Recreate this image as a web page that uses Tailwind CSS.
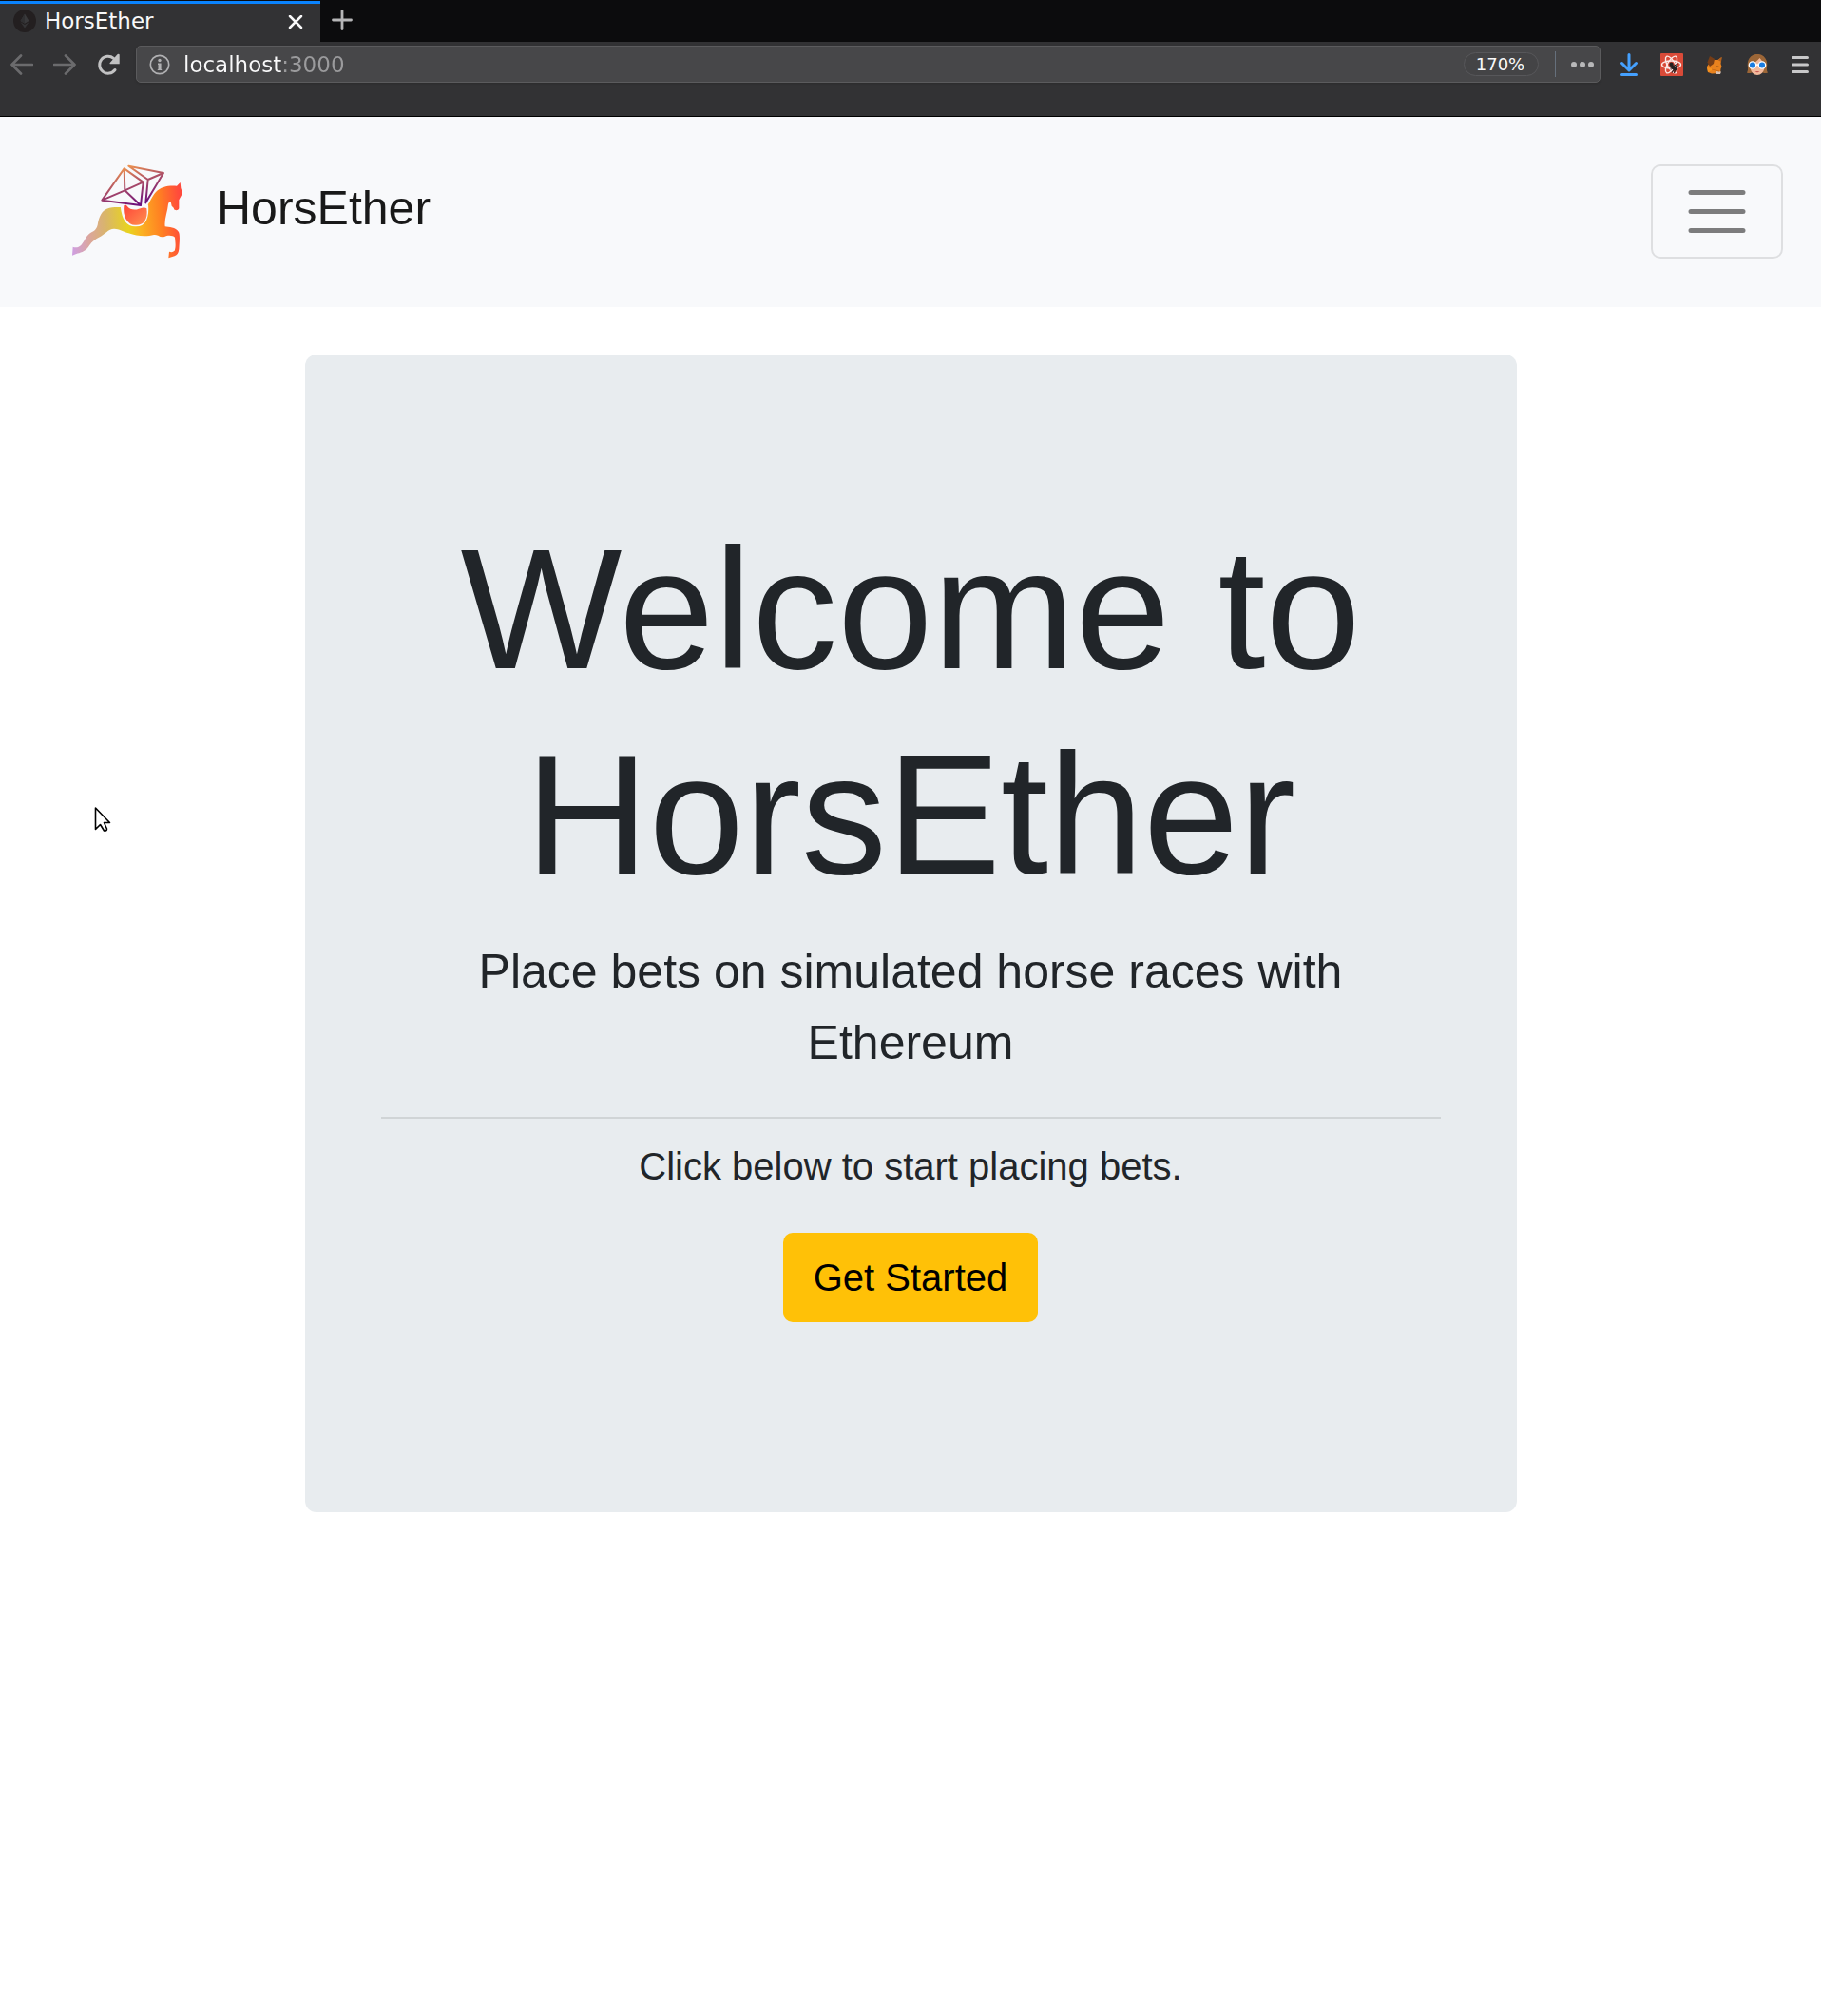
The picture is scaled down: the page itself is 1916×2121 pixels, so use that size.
<!DOCTYPE html>
<html lang="en">
<head>
<meta charset="utf-8">
<meta name="viewport" content="width=device-width, initial-scale=1">
<title>HorsEther</title>
<script src="https://cdn.jsdelivr.net/npm/@tailwindcss/browser@4"></script>
</head>
<body class="relative min-h-screen bg-white font-['Liberation_Sans',Arial,sans-serif] text-[#212529]">

<!-- Browser window chrome -->
<div class="border-b border-black bg-[#323234] font-['DejaVu_Sans',sans-serif] text-[#f9f9fa]">
  <div class="flex h-11 bg-[#0c0c0d] pt-px">
    <div class="flex w-[337px] items-center border-t-3 border-[#0a84ff] bg-[#323234] pr-[18px] pb-1 pl-[14px]">
      <svg class="size-6 shrink-0" viewBox="0 0 24 24" aria-hidden="true">
        <circle cx="12" cy="12" r="12" fill="#231f20"/>
        <path d="M12 4.500l4.500 7.500-4.500 2.700-4.500-2.700z" fill="#39393b"/>
        <path d="M7.500 13.200l4.500 2.700 4.500-2.700-4.500 6.300z" fill="#343436"/>
        <path d="M12 4.500v10.200l-4.500-2.700z" fill="#303032"/>
      </svg>
      <span class="ml-[9px] flex-1 text-[23px] leading-8">HorsEther</span>
      <button type="button" aria-label="Close tab" class="mt-1">
        <svg class="size-4" viewBox="0 0 16 16" fill="none" stroke="#f9f9fa" stroke-width="2.500" stroke-linecap="round" aria-hidden="true"><path d="M2 1l12 12M14 1L2 13"/></svg>
      </button>
    </div>
    <button type="button" aria-label="New tab" class="ml-3 pb-1">
      <svg class="size-[22px]" viewBox="0 0 22 22" fill="none" stroke="#b6b6b7" stroke-width="2.800" stroke-linecap="round" aria-hidden="true"><path d="M11 1.500v19M1.500 11h19"/></svg>
    </button>
  </div>
  <div class="flex items-center pt-1 pr-[10px] pb-[35px] pl-[11px]">
    <div class="mr-[18px] flex gap-[21px]">
      <button type="button" aria-label="Back"><svg class="size-6" viewBox="0 0 24 24" fill="none" stroke="#6b6b6d" stroke-width="2.700" stroke-linecap="round" stroke-linejoin="round" aria-hidden="true"><path d="M23 12H1.500M11 2.500L1.500 12l9.500 9.500"/></svg></button>
      <button type="button" aria-label="Forward"><svg class="size-6" viewBox="0 0 24 24" fill="none" stroke="#6b6b6d" stroke-width="2.700" stroke-linecap="round" stroke-linejoin="round" aria-hidden="true"><path d="M1 12h21.500M13 2.500l9.500 9.500-9.500 9.500"/></svg></button>
      <button type="button" aria-label="Reload"><svg class="size-6 overflow-visible" viewBox="-1 0 24 24" aria-hidden="true"><path d="M19 17.500A9 9 0 1 1 17.500 5.300" fill="none" stroke="#c2c2c3" stroke-width="3" stroke-linecap="round"/><path d="M23.700 1.400v9.800h-9.800q-.9-.5-.2-1.200l8-8.900q1.400-.9 2 .3z" fill="#c2c2c3"/></svg></button>
    </div>
    <div class="mr-[18px] flex h-[39px] min-w-0 flex-1 items-center rounded-[5px] border border-[#5b5b5d] bg-[#474749] pl-[13px] shadow-sm">
      <svg class="size-[22px] shrink-0" viewBox="0 0 22 22" aria-hidden="true"><circle cx="11" cy="11" r="9.700" fill="none" stroke="#b1b1b3" stroke-width="1.700"/><circle cx="11" cy="6.500" r="1.700" fill="#b1b1b3"/><path d="M9 9.500h3.600v6.500H13.200v1H8.800V16h.7v-5H9z" fill="#b1b1b3"/></svg>
      <input type="text" aria-label="Address" value="localhost:3000" class="ml-[14px] h-9 min-w-0 flex-1 bg-[linear-gradient(90deg,#f9f9fa_104px,#9b9b9d_104px)] bg-clip-text text-[23px] text-transparent outline-none">
      <button type="button" class="h-[25px] w-[79px] rounded-full border border-[#57575a] bg-[#444446] pr-0.5 text-lg leading-[23px]">170%</button>
      <span class="mr-4 ml-[17px] h-[27px] w-px bg-[#66707c]"></span>
      <button type="button" aria-label="Page actions" class="mr-[6px]"><svg class="h-2 w-6" viewBox="0 0 24 8" fill="#b8b8b9" aria-hidden="true"><circle cx="3" cy="4" r="3"/><circle cx="12" cy="4" r="3"/><circle cx="21" cy="4" r="3"/></svg></button>
    </div>
    <div class="flex gap-[21px]">
      <button type="button" aria-label="Downloads"><svg class="size-6" viewBox="0 0 24 24" fill="none" stroke="#45a1ff" stroke-width="3" stroke-linecap="round" stroke-linejoin="round" aria-hidden="true"><path d="M12 1.500v16M4.500 10.500l7.500 7.500 7.500-7.500M4.500 22.500h15"/></svg></button>
      <button type="button" aria-label="React Developer Tools"><svg class="size-6" viewBox="0 0 24 24" fill="none" aria-hidden="true">
        <rect width="24" height="24" rx="1" fill="#d94a38"/>
        <g stroke="#fbe9e7" stroke-width="1.400"><ellipse cx="11.500" cy="12" rx="10" ry="4"/><ellipse cx="11.500" cy="12" rx="10" ry="4" transform="rotate(60 11.500 12)"/><ellipse cx="11.500" cy="12" rx="10" ry="4" transform="rotate(120 11.500 12)"/></g>
        <g stroke="#231f20" stroke-width="1.200"><path d="M10.500 17l9-3M12 20.500l4-6M14.500 21l2-8M10 14.500l6 3M14.500 13l4-2"/></g>
        <circle cx="11.500" cy="11.700" r="2.200" fill="#231f20"/><ellipse cx="14.500" cy="15.500" rx="2" ry="3.500" transform="rotate(-42 14.500 15.500)" fill="#231f20"/>
      </svg></button>
      <button type="button" aria-label="MetaMask"><svg class="size-6" viewBox="0 0 24 24" aria-hidden="true">
        <path d="M19.500 4l-4 3H9L4 14l1 6 4 1.500 9-.5.500-4.500 1-2.500-1-3z" fill="#e8821e"/>
        <path d="M7 3l5 3-1 5-4 3-2.500-4.500z" fill="#763d16"/><path d="M19.500 4l-4 3 3.500 2z" fill="#b45f1c"/><path d="M4 15l7.500 2-6.500 3z" fill="#f6931f"/><path d="M14 13.500l3 .5-1.500 1z" fill="#4a2b18"/><path d="M13 19l6 .5-1 2.500h-5z" fill="#d7c1b3"/><path d="M9 17l8 2" stroke="#c86a18"/>
      </svg></button>
      <button type="button" aria-label="Privacy extension"><svg class="size-6" viewBox="0 0 24 24" aria-hidden="true">
        <path d="M1 20.500C3.500 17 .5 12 2.500 7.500 4.500 2.500 8 1 12 1s7.500 1.500 9.500 6.500c2 4.500-1 9.500 1.500 13q-3 1-5 0H6q-3 1-5 0z" fill="#9c6637"/>
        <path d="M4.500 12q6-2 10-7 2.500 3.500 5 5.500v5.500q-2 7-7.500 7t-7.500-7z" fill="#f2b99b"/>
        <g fill="#1a7ce0" stroke="#fff" stroke-width="1.300"><circle cx="7" cy="12.500" r="3.700"/><circle cx="17" cy="12.500" r="3.700"/></g><path d="M10.500 12.500q1.500-1.200 3 0" fill="none" stroke="#fff" stroke-width="1.500"/>
        <path d="M9.500 19.500q2.500-1.200 5 0-2.500 1.500-5 0z" fill="#c5504c"/>
      </svg></button>
      <button type="button" aria-label="Open menu"><svg class="size-6" viewBox="0 0 24 24" fill="none" stroke="#c8c8c9" stroke-width="3" stroke-linecap="round" aria-hidden="true"><path d="M4.500 4.500h15M4.500 12h15M4.500 19.500h15"/></svg></button>
    </div>
  </div>
</div>

<!-- Site navigation -->
<nav class="flex h-[200px] items-center justify-between bg-[#f8f9fb] pr-10 pb-0.5 pl-[76px]">
  <a href="#" class="flex items-center gap-9 text-[50px] leading-[75px] text-black/90">
    <svg class="h-[99px] w-[116px]" viewBox="48 39 348 297" fill="none" aria-hidden="true">
      <defs>
        <linearGradient id="coat" gradientUnits="userSpaceOnUse" x1="48" y1="290" x2="395" y2="260">
          <stop offset="0" stop-color="#cf9fe0"/><stop offset=".16" stop-color="#dba69c"/><stop offset=".32" stop-color="#d9b56a"/><stop offset=".52" stop-color="#e8d31f"/><stop offset=".64" stop-color="#fbb022"/><stop offset=".82" stop-color="#ff8022"/><stop offset="1" stop-color="#ff4a3c"/>
        </linearGradient>
        <linearGradient id="saddle" x1="0" y1="0" x2="1" y2="1"><stop stop-color="#ff4338"/><stop offset="1" stop-color="#ff9250"/></linearGradient>
        <linearGradient id="gem" gradientUnits="userSpaceOnUse" x1="210" y1="45" x2="250" y2="170"><stop stop-color="#f0964f"/><stop offset=".5" stop-color="#a84a68"/><stop offset="1" stop-color="#6b0f7d"/></linearGradient>
      </defs>
      <path fill="url(#coat)" d="M48 326L50 299Q59 303 68 299C82 294 87 271 99 260C111 249 123 250 128 230C133 201 142 186 157 179C172 173 187 174 204 174L280 174C294 160 299 139 312 126C329 109 351 105 378 107L389 96L391 114Q396 125 393 136L385 151L385 178Q383 184 376 184Q368 183 368 176L362 170L359 157Q354 154 351 164C349 188 338 212 341 235C353 237 374 237 384 252C389 263 386 287 385 306Q383 324 371 328L352 334L354 314Q364 318 371 311C376 299 373 281 372 269C366 262 349 261 339 267Q328 270 319 263Q311 260 306 261C283 267 253 266 226 256C209 251 193 241 180 242C161 243 152 259 132 269C119 276 111 281 99 299C88 315 72 317 61 321z"/>
      <path fill="#f8f9fb" d="M200 170L288 166Q291 197 282 215Q272 235 249 235Q227 236 215 219Q204 204 200 170z"/>
      <path fill="url(#saddle)" d="M211 169Q216 164 221 170C230 182 245 184 258 179C272 175 278 174 283 178Q287 203 276 219Q265 232 246 230Q229 230 218 212Q208 195 211 169z"/>
      <g stroke="url(#gem)" stroke-width="6" stroke-linejoin="round"><path d="M212 52L142 152L264 168L272 95zL214 121L142 152M272 95L214 121L264 168"/><path d="M226 44L336 66L280 160L287 87zM336 66L287 87"/></g>
    </svg>
    <span class="pb-1.5">HorsEther</span>
  </a>
  <button type="button" aria-label="Toggle navigation" class="rounded-[10px] border-2 border-black/10 px-[30px] py-[10px]">
    <svg class="size-[75px]" viewBox="0 0 30 30" fill="none" stroke="#000" stroke-opacity=".5" stroke-width="2" stroke-linecap="round" stroke-miterlimit="10" aria-hidden="true"><path d="M4 7h22M4 15h22M4 23h22"/></svg>
  </button>
</nav>

<!-- Welcome panel -->
<main class="mx-auto mt-[50px] w-full max-w-[1275px] rounded-xl bg-[#e8ecef] px-20 py-40 text-center">
  <h1 class="mb-5 text-[180px] leading-[216px]">Welcome to HorsEther</h1>
  <p class="mb-10 text-[50px] leading-[75px]">Place bets on simulated horse races with Ethereum</p>
  <hr class="mb-5 border-t-2 border-black/10">
  <p class="mb-10 text-[40px] leading-[60px]">Click below to start placing bets.</p>
  <button type="button" class="mx-auto mb-10 block rounded-[10px] bg-[#ffc107] px-8 py-[17px] text-[40px] leading-[60px] text-black">Get Started</button>
</main>

<!-- Mouse pointer -->
<svg class="pointer-events-none absolute top-[848px] left-[99px] h-[28px] w-[18px]" viewBox="0 0 18 28" aria-hidden="true"><path d="M1.500 2v22.500l5-5 4 6.500q3 .5 3-2l-3-6.500h6z" fill="#fff" stroke="#000" stroke-width="1.600" stroke-linejoin="round"/></svg>
</body>
</html>
